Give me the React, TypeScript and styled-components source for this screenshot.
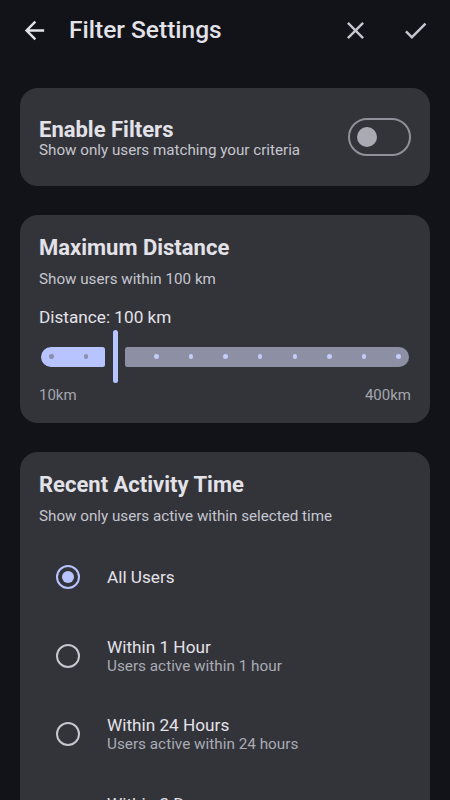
import { useState } from "react";
import styled, { createGlobalStyle } from "styled-components";
import { MdArrowBack, MdClose, MdCheck } from "react-icons/md";

const GlobalStyle = createGlobalStyle`
  html, body {
    margin: 0;
    padding: 0;
    background: #121318;
    font-family: Roboto, "Noto Sans", sans-serif;
    overflow: hidden;
  }
`;

const Page = styled.div`
  width: 450px;
  height: 800px;
  overflow: hidden;
  background: #121318;
  color: #e3e2e9;
`;

const TopBar = styled.header`
  height: 60px;
  display: flex;
  align-items: center;
  padding: 0 11px 0 10px;
`;

const IconButton = styled.button<{ $tone?: string }>`
  width: 48px;
  height: 48px;
  display: flex;
  align-items: center;
  justify-content: center;
  background: none;
  border: none;
  padding: 0;
  color: ${(props) => props.$tone || "#e3e2e9"};
`;

const Title = styled.h1`
  flex: 1;
  margin: 0 0 0 11px;
  font-size: 24.5px;
  font-weight: 500;
  line-height: 30px;
  color: #e3e2e9;
`;

const Actions = styled.div`
  display: flex;
  gap: 12px;
`;

const Content = styled.main`
  display: flex;
  flex-direction: column;
  gap: 29px;
  padding: 28px 20px 0;
`;

const Card = styled.section`
  background: #333439;
  border-radius: 18px;
  padding: 21px 19px 19px;
`;

const ToggleCard = styled(Card)`
  height: 98px;
  box-sizing: border-box;
  padding: 0 19px;
  display: flex;
  align-items: center;
  justify-content: space-between;
`;

const ToggleText = styled.div`
  padding-top: 2px;
`;

const CardTitle = styled.h2`
  margin: 0;
  font-size: 22px;
  font-weight: 700;
  line-height: 23px;
  color: #e3e2e9;
`;

const CardText = styled.p<{ $gap?: number }>`
  margin: ${(props) => props.$gap ?? 0}px 0 0;
  font-size: 15.2px;
  line-height: 18px;
  color: #c5c6d0;
`;

const Switch = styled.div`
  width: 63px;
  height: 38px;
  box-sizing: border-box;
  border: 2.4px solid #8f909a;
  border-radius: 19px;
  display: flex;
  align-items: center;
  padding-left: 7px;
`;

const Thumb = styled.span`
  width: 20px;
  height: 20px;
  border-radius: 50%;
  background: #a9aab3;
`;

const ValueLabel = styled.div`
  margin-top: 18px;
  font-size: 17.2px;
  line-height: 22px;
  color: #e3e2e9;
`;

const Slider = styled.div`
  margin-top: 2px;
  height: 53px;
  display: flex;
  align-items: center;
  padding: 0 2px;
`;

const Track = styled.div<{ $active?: boolean }>`
  height: 20px;
  box-sizing: border-box;
  display: flex;
  align-items: center;
  justify-content: space-between;
  background: ${(props) => (props.$active ? "#b7c4ff" : "#8d90a4")};
  border-radius: ${(props) => (props.$active ? "10px 2.5px 2.5px 10px" : "2.5px 10px 10px 2.5px")};
  padding: ${(props) => (props.$active ? "0 17px 0 8px" : "0 8px 0 29px")};
  flex: ${(props) => (props.$active ? "none" : "1")};
`;

const Dot = styled.span<{ $active?: boolean }>`
  width: 4.5px;
  height: 4.5px;
  border-radius: 50%;
  background: ${(props) => (props.$active ? "#8a90a8" : "#c3ccf8")};
`;

const Handle = styled.span`
  width: 5px;
  height: 53px;
  border-radius: 3px;
  background: #b7c4ff;
  margin: 0 7px 0 8px;
`;

const RangeLabels = styled.div`
  margin-top: 3px;
  display: flex;
  justify-content: space-between;
  font-size: 15px;
  line-height: 18px;
  color: #a3a5ae;
`;

const OptionList = styled.div`
  margin-top: 13px;
  display: flex;
  flex-direction: column;
`;

const Option = styled.label`
  height: 78.6px;
  display: flex;
  align-items: center;
`;

const RadioBox = styled.span`
  width: 58px;
  height: 58px;
  display: flex;
  align-items: center;
  justify-content: center;
  margin-right: 10px;
  flex: none;
`;

const Radio = styled.span<{ $checked: boolean }>`
  width: 24px;
  height: 24px;
  box-sizing: border-box;
  border-radius: 50%;
  border: 2.4px solid ${(props) => (props.$checked ? "#b7c4ff" : "#c5c6d0")};
  display: flex;
  align-items: center;
  justify-content: center;
  &::after {
    content: "";
    width: 12px;
    height: 12px;
    border-radius: 50%;
    background: ${(props) => (props.$checked ? "#b7c4ff" : "transparent")};
  }
`;

const OptionTitle = styled.div`
  font-size: 17.2px;
  line-height: 20px;
  color: #e3e2e9;
`;

const OptionSub = styled.div`
  font-size: 15.3px;
  line-height: 18px;
  color: #a9abb5;
`;

interface ActivityOption {
  id: string;
  title: string;
  sub?: string;
}

const options: ActivityOption[] = [
  { id: "all", title: "All Users" },
  { id: "1h", title: "Within 1 Hour", sub: "Users active within 1 hour" },
  { id: "24h", title: "Within 24 Hours", sub: "Users active within 24 hours" },
  { id: "3d", title: "Within 3 Days", sub: "Users active within 3 days" },
];

function App() {
  const [selected, setSelected] = useState("all");
  const distance = 100;

  return (
    <>
      <GlobalStyle />
      <Page>
        <TopBar>
          <IconButton>
            <MdArrowBack size={29} />
          </IconButton>
          <Title>Filter Settings</Title>
          <Actions>
            <IconButton $tone="#c5c6d0">
              <MdClose size={29} />
            </IconButton>
            <IconButton $tone="#c5c6d0">
              <MdCheck size={29} />
            </IconButton>
          </Actions>
        </TopBar>

        <Content>
          <ToggleCard>
            <ToggleText>
              <CardTitle>Enable Filters</CardTitle>
              <CardText>Show only users matching your criteria</CardText>
            </ToggleText>
            <Switch>
              <Thumb />
            </Switch>
          </ToggleCard>

          <Card>
            <CardTitle>Maximum Distance</CardTitle>
            <CardText $gap={11}>Show users within {distance} km</CardText>
            <ValueLabel>Distance: {distance} km</ValueLabel>
            <Slider>
              <Track $active style={{ width: 64 }}>
                <Dot $active />
                <Dot $active />
              </Track>
              <Handle />
              <Track>
                {Array.from({ length: 8 }).map((_, i) => (
                  <Dot key={i} />
                ))}
              </Track>
            </Slider>
            <RangeLabels>
              <span>10km</span>
              <span>400km</span>
            </RangeLabels>
          </Card>

          <Card>
            <CardTitle>Recent Activity Time</CardTitle>
            <CardText $gap={11}>Show only users active within selected time</CardText>
            <OptionList>
              {options.map((opt) => (
                <Option key={opt.id} onClick={() => setSelected(opt.id)}>
                  <RadioBox>
                    <Radio $checked={selected === opt.id} />
                  </RadioBox>
                  <div>
                    <OptionTitle>{opt.title}</OptionTitle>
                    {opt.sub && <OptionSub>{opt.sub}</OptionSub>}
                  </div>
                </Option>
              ))}
            </OptionList>
          </Card>
        </Content>
      </Page>
    </>
  );
}

export default App;
